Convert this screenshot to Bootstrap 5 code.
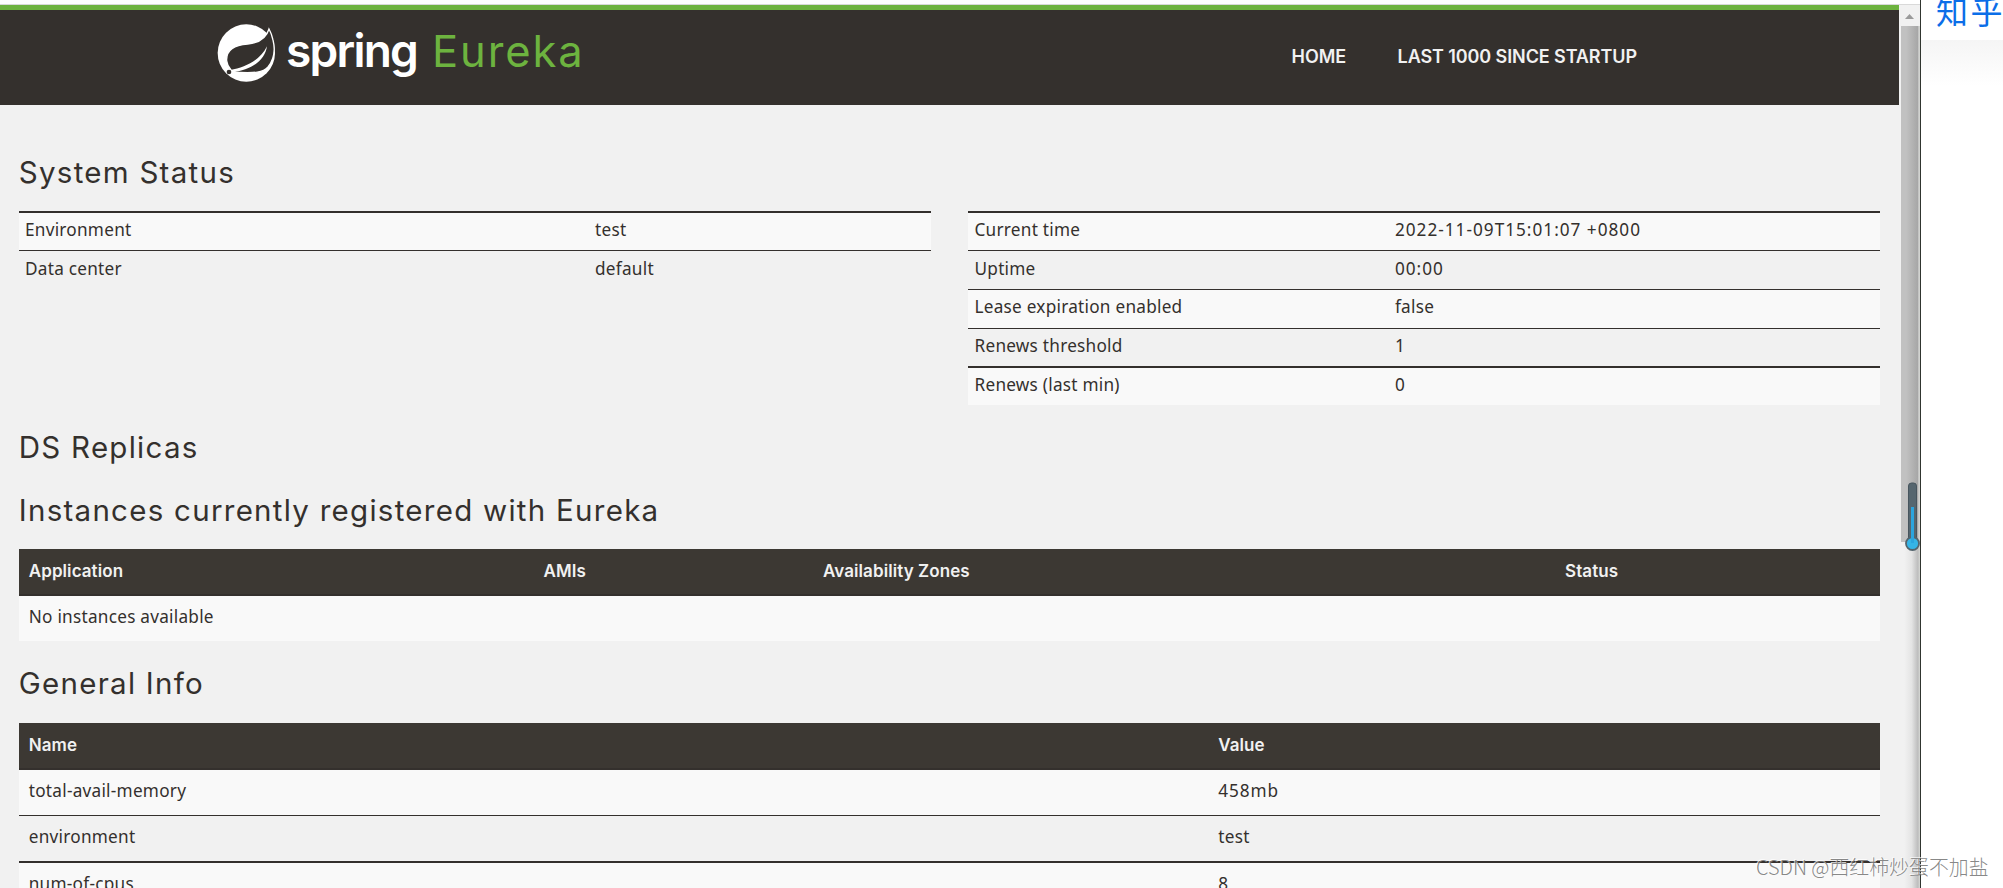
<!DOCTYPE html>
<html lang="en">
<head>
<meta charset="utf-8">
<title>Eureka</title>
<link href="https://cdn.jsdelivr.net/npm/bootstrap@5.3.0/dist/css/bootstrap.min.css" rel="stylesheet">
<style>
body{font-family:"Noto Sans","Noto Sans CJK SC",sans-serif;font-size:17.2px;line-height:24px;letter-spacing:.25px;color:#34302d;background:#fff;height:888px}
.window{width:1920px;background:#f1f1f1}
.top-strip{height:5px;background:#fff;border-bottom:1px solid #d9d9d9}
.page{width:1899px}
.spring-nav{height:100px;background:#34302d;border-top:5px solid #6db33f;padding:0 0 0 217px}
.brand-mark{width:60px;height:60px;margin-top:13px}
.brand-word{font:600 46px/56px Inter,sans-serif;letter-spacing:-1.75px;color:#fff;margin:12px 0 0 9px;width:146px}
.brand-name{font:400 43.5px/56px Inter,sans-serif;letter-spacing:1.9px;color:#6db33f;margin-top:13px}
.menu-link{font:600 18px/24px Inter,sans-serif;letter-spacing:-.1px;color:#f1f1f1;padding:0;margin-top:35px;white-space:nowrap}
h1{font:400 29.5px/34px Inter,sans-serif;letter-spacing:1.27px;margin:25px 0 23px}
h1.first-title{margin:50px 0 22px}
h1.tight-title{margin:25px 0 29px}
h1.instances-title{margin:0 0 22px}
.page .col-6{padding:0 18.75px}
.page .table{border-collapse:separate;border-spacing:0;table-layout:fixed;margin:0;color:#34302d}
.page .table td,.page .table th{background:#f1f1f1;box-shadow:none;border:0 solid #34302d;border-top-width:1px;vertical-align:top;white-space:nowrap;color:#34302d}
.page .table tbody tr:nth-child(odd) td{background:#f9f9f9}
.page .kv td{padding:5px 6.25px 0;height:39px}
.page .kv tr:nth-child(2) td{padding-top:6px}
.page .table tr.thick td{border-top-width:2px}
.page .kv tr.short td{height:38px}
.page .info th{background:#3c3833;color:#f1f1f1;height:47px;padding:10px 10px 0;border-width:0 0 2px;font:600 17px/24px Inter,sans-serif;letter-spacing:.08px}
.page .info td{height:46px;padding:9px 10px 0}
.page .info tbody tr:first-child td{border-top:0;height:45px}
.page .table td.figures{letter-spacing:1px}
.scroll-track{width:21px;background:linear-gradient(90deg,#f1f1f1 0 25%,#e4e4e4 60%,#bdbdbd 90%,#d8dad6 100%)}
.arrow-box{height:21px;background:#f1f1f1;padding:9px 0 0 6px}
.thumb{width:17px;height:516px;margin-left:2px;background:linear-gradient(90deg,#c1c1c1 30%,#a6a6a6)}
.edge{width:1px;background:#30352f}
.side-head{display:flow-root;height:40px;background:#fff;color:#0b6ee8;font:400 32px/40px "Noto Sans CJK SC",sans-serif;letter-spacing:2.6px;padding-left:15px;white-space:nowrap}
.side-head span{display:block;margin-top:-10px}
.side-shade{height:46px;background:linear-gradient(#f5f5f5,#fff)}
.thermo{left:1903px;top:481px}
.watermark{left:1756px;top:853px;font:300 19.9px/28px "Noto Sans CJK SC",sans-serif;letter-spacing:0;color:rgba(120,120,120,.9);text-shadow:-1px -1px 0 rgba(255,255,255,.75);white-space:nowrap}
</style>
</head>
<body class="position-relative overflow-hidden d-flex">
<div class="window flex-shrink-0 h-100 overflow-hidden">
  <div class="top-strip"></div>
  <div class="d-flex">
    <main class="page flex-shrink-0">
      <nav class="spring-nav d-flex align-items-start">
        <svg class="brand-mark flex-shrink-0" viewBox="36 25 180 180">
          <circle cx="124" cy="115" r="86" fill="#fff"/>
          <path d="M192 43C186 63 170 84 128 88C88 91 63 106 65 138C66 150 71 158 79 167L92 173C140 174 172 177 189 157C205 137 212 108 204 76C201 62 197 52 192 43Z" fill="#34302d" stroke="#fff" stroke-width="4"/>
          <path d="M76 166C120 158 165 138 186 95C180 135 145 165 78 174Z" fill="#fff"/>
          <circle cx="72" cy="172" r="7" fill="#34302d"/>
        </svg>
        <span class="brand-word">spring</span>
        <span class="brand-name">Eureka</span>
        <ul class="nav flex-nowrap" style="margin-left:707px">
          <li class="nav-item"><a class="nav-link menu-link" style="width:106px" href="#">HOME</a></li>
          <li class="nav-item"><a class="nav-link menu-link" href="#">LAST 1000 SINCE STARTUP</a></li>
        </ul>
      </nav>

      <div class="row g-0">
        <div class="col-6">
          <h1 class="first-title">System Status</h1>
          <table class="table kv">
            <colgroup><col style="width:62.5%"><col></colgroup>
            <tbody>
              <tr class="thick"><td>Environment</td><td>test</td></tr>
              <tr><td>Data center</td><td>default</td></tr>
            </tbody>
          </table>
        </div>
        <div class="col-6">
          <table class="table kv" style="margin-top:106px">
            <colgroup><col style="width:46.1%"><col></colgroup>
            <tbody>
              <tr class="thick"><td>Current time</td><td class="figures">2022-11-09T15:01:07 +0800</td></tr>
              <tr><td>Uptime</td><td class="figures">00:00</td></tr>
              <tr><td>Lease expiration enabled</td><td>false</td></tr>
              <tr class="short"><td>Renews threshold</td><td>1</td></tr>
              <tr class="thick"><td>Renews (last min)</td><td>0</td></tr>
            </tbody>
          </table>
        </div>
      </div>

      <div style="padding:0 18.75px">
        <h1 class="tight-title">DS Replicas</h1>
        <h1 class="instances-title">Instances currently registered with Eureka</h1>
        <table class="table info">
          <colgroup><col style="width:514.75px"><col style="width:279.5px"><col style="width:742px"><col></colgroup>
          <thead><tr><th>Application</th><th>AMIs</th><th>Availability Zones</th><th>Status</th></tr></thead>
          <tbody><tr><td colspan="4">No instances available</td></tr></tbody>
        </table>
        <h1>General Info</h1>
        <table class="table info">
          <colgroup><col style="width:1189.5px"><col></colgroup>
          <thead><tr><th>Name</th><th>Value</th></tr></thead>
          <tbody>
            <tr><td>total-avail-memory</td><td><span style="letter-spacing:.9px">458mb</span></td></tr>
            <tr><td>environment</td><td>test</td></tr>
            <tr class="thick"><td>num-of-cpus</td><td>8</td></tr>
          </tbody>
        </table>
      </div>
    </main>
    <div class="scroll-track">
      <div class="arrow-box"><svg class="d-block" width="9" height="5" viewBox="0 0 9 5"><path d="M0 5L4.500 0L9 5Z" fill="#9a9a9a"/></svg></div>
      <div class="thumb"></div>
    </div>
  </div>
</div>
<div class="edge flex-shrink-0"></div>
<aside class="flex-grow-1 overflow-hidden">
  <div class="side-head"><span>知乎</span></div>
  <div class="side-shade"></div>
</aside>
<svg class="thermo position-absolute" width="18" height="72" viewBox="0 0 18 72">
  <rect x="5.500" y="2" width="8" height="60" rx="3" fill="#56666f" stroke="#47555e"/>
  <circle cx="9.500" cy="62.500" r="6.500" fill="#35b4e6" stroke="#53646d" stroke-width="1.800"/>
  <path d="M9.500 26V62" stroke="#2ba5de" stroke-width="3"/>
</svg>
<div class="watermark position-absolute">CSDN @西红柿炒蛋不加盐</div>
<script src="https://cdn.jsdelivr.net/npm/bootstrap@5.3.0/dist/js/bootstrap.bundle.min.js"></script>
</body>
</html>
